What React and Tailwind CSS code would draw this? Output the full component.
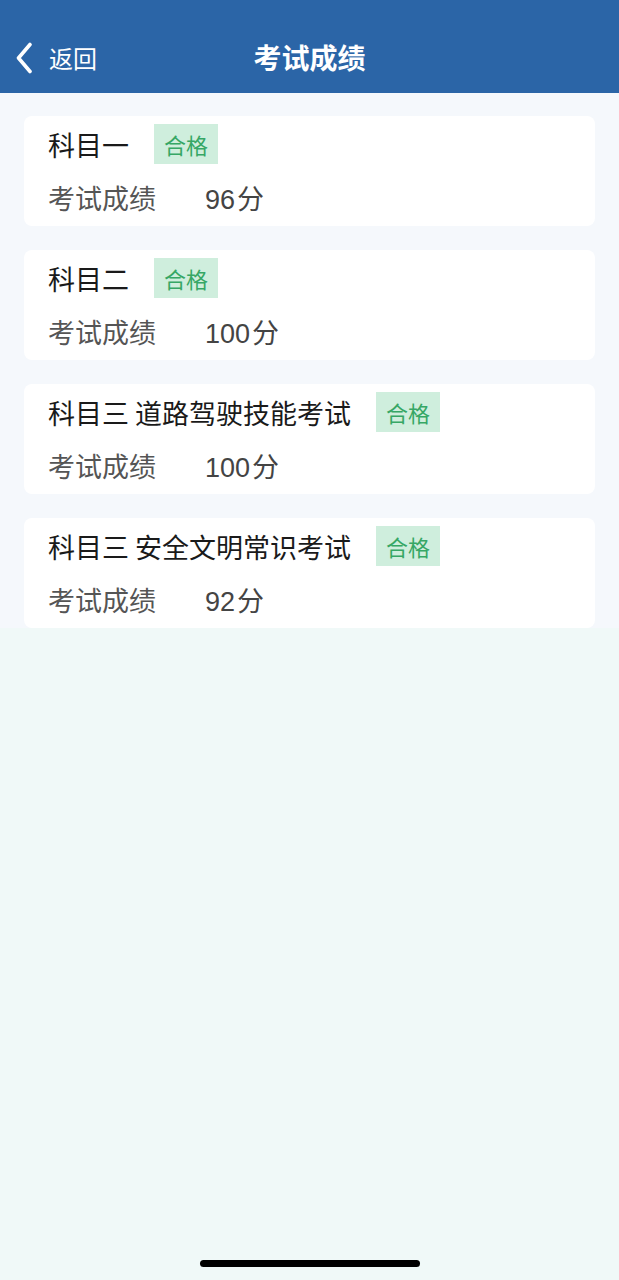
const results = [
  { name: '科目一', score: '96' },
  { name: '科目二', score: '100' },
  { name: '科目三 道路驾驶技能考试', score: '100' },
  { name: '科目三 安全文明常识考试', score: '92' },
];

const ScoreCard = ({ name, score }) => (
  <div className="bg-white rounded-lg pl-6 pr-4 pt-2 pb-[8px]">
    <div className="flex items-center h-10">
      <span className="text-[27px] text-[#1a1a1a] leading-none whitespace-pre">{name}</span>
      <span className="ml-[25px] h-10 px-[10px] flex items-center bg-[#cfeedd] text-[#36a765] text-[22px] leading-none">
        合格
      </span>
    </div>
    <div className="flex items-baseline h-10 mt-[14px]">
      <span className="w-[157px] text-[27px] text-[#555555] leading-10">考试成绩</span>
      <span
        className="text-[27px] text-[#444444] leading-10"
        style={{ fontFamily: '"Liberation Sans", "Noto Sans CJK SC", sans-serif' }}
      >
        {score}
        <span className="ml-[2px]">分</span>
      </span>
    </div>
  </div>
);

export default function App() {
  return (
    <div
      className="min-h-screen flex flex-col bg-[#f0f9f8]"
      style={{ fontFamily: '"Noto Sans CJK SC", "Noto Sans", sans-serif' }}
    >
      {/* Header */}
      <div className="h-[93px] bg-[#2b65a7] pt-[42px] px-[14px]">
        <div className="relative h-8 flex items-center text-white">
          <svg width="20" height="32" viewBox="0 0 20 32" fill="none" stroke="currentColor" strokeWidth={3.6} strokeLinecap="round" strokeLinejoin="round">
            <path d="M16 2.5L4.5 16 16 29.5" />
          </svg>
          <span className="ml-[15px] text-[24px] leading-none">返回</span>
          <div className="absolute left-[-14px] right-[-14px] top-[-1px] text-center text-[28px] font-bold leading-8">
            考试成绩
          </div>
        </div>
      </div>

      {/* List */}
      <div className="bg-[#f5f8fc] px-6 pt-[23px] flex flex-col gap-6">
        {results.map((r) => (
          <ScoreCard key={r.name} {...r} />
        ))}
      </div>

      {/* Rest */}
      <div className="flex-1 flex items-end justify-center pb-[13px]">
        <div className="w-[220px] h-[7px] rounded-full bg-black" />
      </div>
    </div>
  );
}
